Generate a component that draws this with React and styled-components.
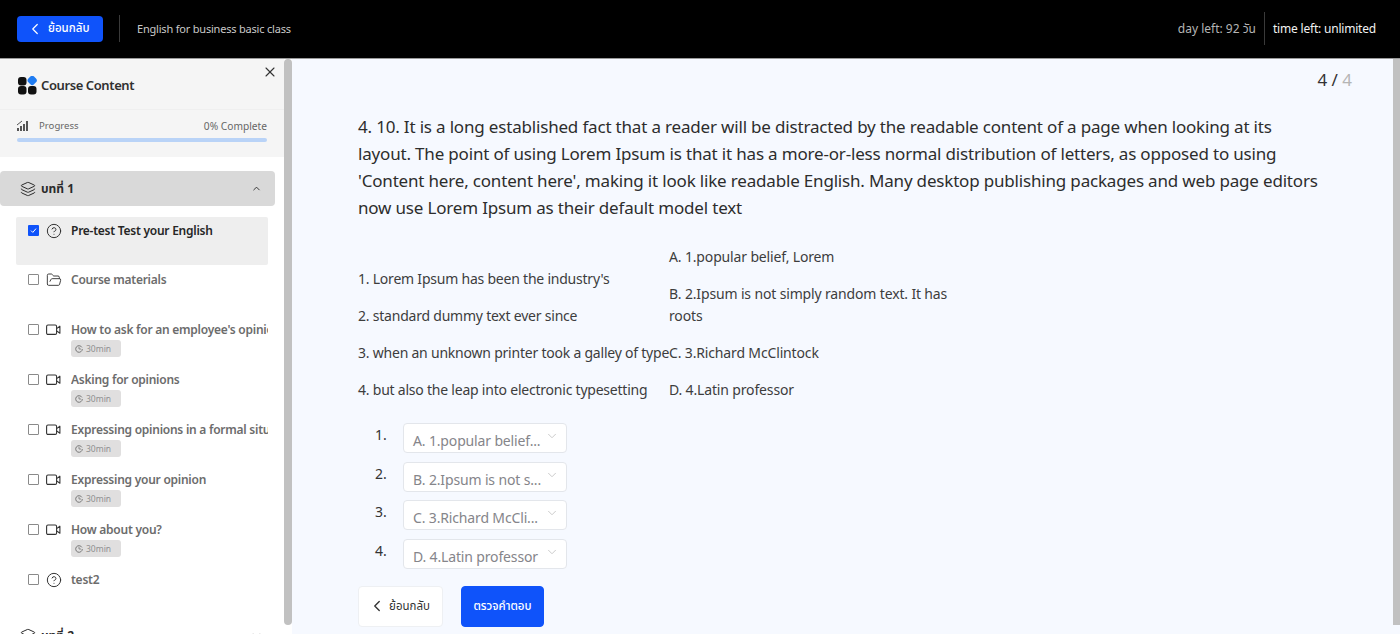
import React from "react";
import styled, { createGlobalStyle } from "styled-components";
import {
  ChevronDown,
  ChevronLeft,
  ChevronUp,
  CircleHelp,
  FolderOpen,
  Layers,
  X,
} from "lucide-react";

const GlobalStyle = createGlobalStyle`
  html, body {
    margin: 0;
    height: 634px;
    overflow: hidden;
    background: #f6f9ff;
    font-family: "Noto Sans", "Noto Sans Thai", "Liberation Sans", sans-serif;
  }
  * { box-sizing: border-box; }
`;

const Page = styled.div`
  display: flex;
  flex-direction: column;
  width: 1400px;
  height: 634px;
  overflow: hidden;
`;

const TopBar = styled.header`
  flex: 0 0 59px;
  display: flex;
  align-items: center;
  padding: 0 24px 1px 17px;
  background: #000;
  border-bottom: 1px solid #9a9a9a;
  color: #c9c9c9;
  font-size: 12px;
`;

const BackButton = styled.button`
  display: flex;
  align-items: center;
  gap: 4px;
  width: 86px;
  height: 26px;
  padding: 0 0 0 9px;
  border: 0;
  border-radius: 4px;
  background: #0f53fa;
  color: #fff;
  font: inherit;
  font-size: 11.5px;
  font-weight: 500;
`;

const BarDivider = styled.span`
  width: 1px;
  height: ${(props) => props.$h}px;
  margin: ${(props) => props.$m};
  background: #3a3a3a;
`;

const CourseName = styled.span`
  font-size: 11px;
  letter-spacing: -0.2px;
`;

const Spacer = styled.div`
  flex: 1;
`;

const DayLeft = styled.span`
  color: #b5b5b5;
`;

const TimeLeft = styled.span`
  color: #f2f2f2;
  letter-spacing: -0.2px;
`;

const Body = styled.div`
  flex: 1;
  display: flex;
  min-height: 0;
`;

const Sidebar = styled.aside`
  flex: 0 0 284px;
  display: flex;
  flex-direction: column;
  background: #fff;
  overflow: hidden;
`;

const SideHead = styled.div`
  position: relative;
  flex: 0 0 51px;
  display: flex;
  align-items: center;
  gap: 4px;
  padding: 2px 0 0 18px;
  background: #f5f5f5;
  border-bottom: 1px solid #efefef;
  font-size: 13px;
  font-weight: 600;
  letter-spacing: -0.4px;
  color: #303030;
`;

const CloseButton = styled.span`
  position: absolute;
  top: 5px;
  right: 6px;
  display: flex;
  color: #333;
`;

const ProgressBox = styled.div`
  flex: 0 0 47px;
  padding: 7px 17px 0;
  background: #f5f5f5;
`;

const ProgressRow = styled.div`
  display: flex;
  align-items: center;
  gap: 11px;
  height: 17px;
  font-size: 10.2px;
  color: #666;
`;

const ProgressLabel = styled.span`
  font-size: 9.6px;
`;

const ProgressTrack = styled.div`
  height: 4px;
  margin-top: 4px;
  border-radius: 2px;
  background: #b9d3f7;
`;

const Chapter = styled.div`
  flex: 0 0 35px;
  display: flex;
  align-items: center;
  gap: 5px;
  width: 275px;
  margin-top: 14px;
  padding: 0 13px 0 20px;
  border-radius: 4px;
  background: #d9d9d9;
  color: #2b2b2b;
  font-size: 12px;
  font-weight: 700;
`;

const LessonList = styled.div`
  flex: 0 0 auto;
  display: flex;
  flex-direction: column;
  gap: 2px;
  margin: 11px 16px 0;
`;

const Lesson = styled.div`
  display: flex;
  gap: 7px;
  height: 48px;
  margin-bottom: ${(props) => (props.$active ? "-1px" : "0")};
  padding: 7px 0 0 12px;
  border-radius: 2px;
  background: ${(props) => (props.$active ? "#eeeeee" : "transparent")};
`;

const Check = styled.span`
  flex: 0 0 11px;
  display: flex;
  align-items: center;
  justify-content: center;
  width: 11px;
  height: 11px;
  margin-top: 1px;
  border: ${(props) => (props.$on ? "0" : "1px solid #8a8a8a")};
  border-radius: 1px;
  background: ${(props) => (props.$on ? "#0f53fa" : "#fff")};
`;

const LessonIcon = styled.span`
  flex: 0 0 16px;
  display: flex;
  height: 16px;
  margin-top: -1px;
  color: #333;
`;

const LessonInfo = styled.div`
  flex: 1;
  min-width: 0;
  margin-left: 2px;
`;

const LessonTitle = styled.div`
  height: 17px;
  margin-top: -2px;
  margin-bottom: 2px;
  overflow: hidden;
  white-space: nowrap;
  font-size: 12px;
  line-height: 17px;
  font-weight: 600;
  letter-spacing: -0.25px;
  color: ${(props) => (props.$active ? "#262626" : "#6c6c6c")};
`;

const Duration = styled.span`
  display: flex;
  align-items: center;
  gap: 3px;
  width: 50px;
  height: 17px;
  padding-left: 4px;
  border-radius: 3px;
  background: #e0dfdf;
  color: #8f8f8f;
  font-size: 8.5px;
`;

const ChapterTwo = styled(Chapter)`
  margin-top: 4px;
  background: transparent;
`;

const ScrollTrack = styled.div`
  flex: 0 0 8px;
  background: #fff;
`;

const ScrollThumb = styled.div`
  height: 566px;
  border-radius: 4px;
  background: #c1c1c1;
`;

const Main = styled.main`
  flex: 1;
  min-width: 0;
  padding: 10px 41px 0 66px;
  background: #f6f9ff;
`;

const Counter = styled.div`
  text-align: right;
  font-size: 17px;
  line-height: 22px;
  color: #333;
`;

const CounterTotal = styled.span`
  color: #b5b5b5;
`;

const Question = styled.p`
  max-width: 965px;
  margin: 22px 0 0;
  font-size: 17px;
  line-height: 27px;
  letter-spacing: -0.18px;
  color: #2d2d2d;
`;

const Match = styled.div`
  display: flex;
  align-items: flex-end;
  margin-top: 10px;
`;

const MatchColumn = styled.div`
  flex: 0 0 ${(props) => props.$w}px;
  min-width: 0;
  white-space: ${(props) => (props.$single ? "nowrap" : "normal")};
  letter-spacing: ${(props) => (props.$single ? "-0.22px" : "-0.15px")};
`;

const MatchItem = styled.p`
  margin: 15px 0 0;
  font-size: 14px;
  line-height: 22px;
  color: #3d3d3d;
`;

const AnswerList = styled.div`
  display: flex;
  flex-direction: column;
  gap: 8.5px;
  margin-top: 22px;
  padding-left: 17px;
`;

const AnswerRow = styled.div`
  display: flex;
  gap: 16px;
`;

const AnswerNumber = styled.span`
  flex: 0 0 12px;
  padding-top: 1px;
  font-size: 14px;
  line-height: 22px;
  color: #333;
`;

const Select = styled.div`
  position: relative;
  width: 164px;
  height: 30px;
  padding: 6px 24px 0 9px;
  overflow: hidden;
  white-space: nowrap;
  border: 1px solid #e3e6eb;
  border-radius: 4px;
  background: #fff;
  color: #85858a;
  font-size: 14px;
  line-height: 22px;
  letter-spacing: -0.15px;
`;

const SelectArrow = styled.span`
  position: absolute;
  top: 5px;
  right: 7px;
  display: flex;
  color: #c4c4c4;
`;

const Actions = styled.div`
  display: flex;
  gap: 18px;
  margin-top: 17px;
`;

const ActionButton = styled.button`
  display: flex;
  align-items: center;
  justify-content: center;
  gap: 3px;
  width: ${(props) => props.$w}px;
  height: 41px;
  padding: 0 ${(props) => (props.$primary ? 0 : 3)}px 0 0;
  border: 1px solid ${(props) => (props.$primary ? "#0f53fa" : "#eef0f3")};
  border-radius: 4px;
  background: ${(props) => (props.$primary ? "#0f53fa" : "#fff")};
  color: ${(props) => (props.$primary ? "#fff" : "#333")};
  font: inherit;
  font-size: 11.5px;
  font-weight: ${(props) => (props.$primary ? 500 : 400)};
`;

const PageScroll = styled.div`
  flex: 0 0 7px;
  height: 566px;
  background: #c1c1c1;
`;

const Logo = () => (
  <svg width="19" height="19" viewBox="0 0 19 19">
    <rect x="0" y="1" width="8.5" height="8.5" rx="3" fill="#111" />
    <rect x="10" y="10" width="8.5" height="8.5" rx="3" fill="#111" />
    <rect x="0" y="10" width="8.5" height="8.5" rx="3" fill="#111" />
    <rect x="10.2" y="0.4" width="8" height="8" rx="2.6" fill="#1f7cf2" transform="rotate(45 14.2 4.4)" />
  </svg>
);

const ProgressIcon = () => (
  <svg width="11" height="11" viewBox="0 0 11 11" fill="#555">
    <rect x="0" y="8" width="2" height="3" />
    <rect x="3" y="6" width="2" height="5" />
    <rect x="6" y="4" width="2" height="7" />
    <rect x="9" y="1" width="2" height="10" />
    <path d="M0 5 L5 1" stroke="#555" strokeWidth="1" fill="none" />
  </svg>
);

const VideoIcon = () => (
  <svg width="15" height="16" viewBox="0 0 15 16" fill="none" stroke="#333" strokeWidth="1.1">
    <rect x="0.6" y="3" width="10" height="9.4" rx="1.4" />
    <path d="M10.6 6.6 L13.9 4.2 V11.2 L10.6 8.9" strokeLinejoin="round" />
  </svg>
);

const ClockIcon = () => (
  <svg width="8" height="8" viewBox="0 0 8 8" fill="none" stroke="#777" strokeWidth="1">
    <path d="M6.9 2.4 A3.3 3.3 0 1 0 7.3 4" />
    <path d="M4 1.8 V4 H6" strokeWidth="0.8" />
  </svg>
);

const lessons = [
  { title: "Pre-test Test your English", icon: "quiz", active: true },
  { title: "Course materials", icon: "folder" },
  { title: "How to ask for an employee's opinion", icon: "video", time: true },
  { title: "Asking for opinions", icon: "video", time: true },
  { title: "Expressing opinions in a formal situation", icon: "video", time: true },
  { title: "Expressing your opinion", icon: "video", time: true },
  { title: "How about you?", icon: "video", time: true },
  { title: "test2", icon: "quiz" },
];

const lessonIcon = (kind) => {
  if (kind === "quiz") return <CircleHelp size={16} strokeWidth={1.5} />;
  if (kind === "folder") return <FolderOpen size={16} strokeWidth={1.4} />;
  return <VideoIcon />;
};

const answers = ["A. 1.popular belief...", "B. 2.Ipsum is not s...", "C. 3.Richard McCli...", "D. 4.Latin professor"];

export default function App() {
  return (
    <Page>
      <GlobalStyle />
      <TopBar>
        <BackButton>
          <ChevronLeft size={18} strokeWidth={1.6} />
          ย้อนกลับ
        </BackButton>
        <BarDivider $h={27} $m="0 17px 0 16px" />
        <CourseName>English for business basic class</CourseName>
        <Spacer />
        <DayLeft>day left: 92 วัน</DayLeft>
        <BarDivider $h={33} $m="0 8px" />
        <TimeLeft>time left: unlimited</TimeLeft>
      </TopBar>
      <Body>
        <Sidebar>
          <SideHead>
            <Logo />
            Course Content
            <CloseButton>
              <X size={16} strokeWidth={1.6} />
            </CloseButton>
          </SideHead>
          <ProgressBox>
            <ProgressRow>
              <ProgressIcon />
              <ProgressLabel>Progress</ProgressLabel>
              <Spacer />
              0% Complete
            </ProgressRow>
            <ProgressTrack />
          </ProgressBox>
          <Chapter>
            <Layers size={16} strokeWidth={1.5} />
            บทที่ 1
            <Spacer />
            <ChevronUp size={11} />
          </Chapter>
          <LessonList>
            {lessons.map((item) => (
              <Lesson key={item.title} $active={item.active}>
                <Check $on={item.active}>
                  {item.active && (
                    <svg width="7" height="7" viewBox="0 0 7 7">
                      <path d="M1 3.6 L2.8 5.4 L6 1.6" stroke="#fff" strokeWidth="1" fill="none" />
                    </svg>
                  )}
                </Check>
                <LessonIcon>{lessonIcon(item.icon)}</LessonIcon>
                <LessonInfo>
                  <LessonTitle $active={item.active}>{item.title}</LessonTitle>
                  {item.time && (
                    <Duration>
                      <ClockIcon />
                      30min
                    </Duration>
                  )}
                </LessonInfo>
              </Lesson>
            ))}
          </LessonList>
          <ChapterTwo>
            <Layers size={16} strokeWidth={1.5} />
            บทที่ 2
            <Spacer />
            <ChevronDown size={11} />
          </ChapterTwo>
        </Sidebar>
        <ScrollTrack>
          <ScrollThumb />
        </ScrollTrack>
        <Main>
          <Counter>
            4 / <CounterTotal>4</CounterTotal>
          </Counter>
          <Question>
            4. 10. It is a long established fact that a reader will be distracted by the readable content of a page when
            looking at its layout. The point of using Lorem Ipsum is that it has a more-or-less normal distribution of
            letters, as opposed to using 'Content here, content here', making it look like readable English. Many desktop
            publishing packages and web page editors now use Lorem Ipsum as their default model text
          </Question>
          <Match>
            <MatchColumn $w={311} $single>
              <MatchItem>1. Lorem Ipsum has been the industry's</MatchItem>
              <MatchItem>2. standard dummy text ever since</MatchItem>
              <MatchItem>3. when an unknown printer took a galley of type</MatchItem>
              <MatchItem>4. but also the leap into electronic typesetting</MatchItem>
            </MatchColumn>
            <MatchColumn $w={280}>
              <MatchItem>A. 1.popular belief, Lorem</MatchItem>
              <MatchItem>B. 2.Ipsum is not simply random text. It has roots</MatchItem>
              <MatchItem>C. 3.Richard McClintock</MatchItem>
              <MatchItem>D. 4.Latin professor</MatchItem>
            </MatchColumn>
          </Match>
          <AnswerList>
            {answers.map((text, i) => (
              <AnswerRow key={text}>
                <AnswerNumber>{i + 1}.</AnswerNumber>
                <Select>
                  {text}
                  <SelectArrow>
                    <ChevronDown size={14} strokeWidth={1.5} />
                  </SelectArrow>
                </Select>
              </AnswerRow>
            ))}
          </AnswerList>
          <Actions>
            <ActionButton $w={85}>
              <ChevronLeft size={18} strokeWidth={1.8} />
              ย้อนกลับ
            </ActionButton>
            <ActionButton $w={83} $primary>
              ตรวจคำตอบ
            </ActionButton>
          </Actions>
        </Main>
        <PageScroll />
      </Body>
    </Page>
  );
}
